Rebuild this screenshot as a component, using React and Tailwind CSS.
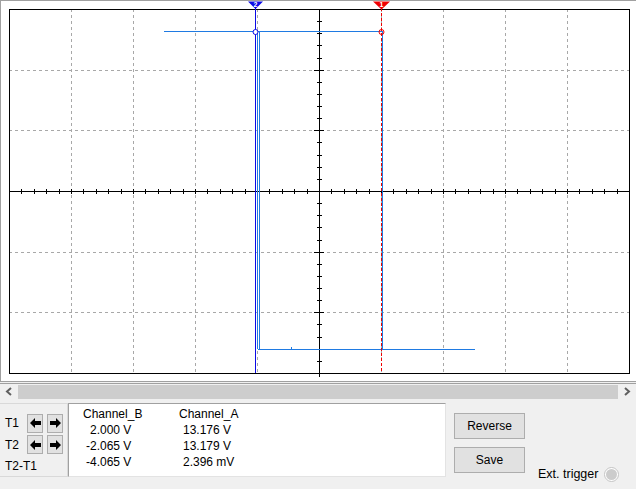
import React from 'react';

// --- Scope geometry (page pixels) ---
const X0 = 9, X1 = 629, Y0 = 9, Y1 = 373;
const DIV_X = 62, DIV_Y = (Y1 - Y0) / 6;
const TRACE = '#1f7ae2';
const CUR2 = '#0a0ae6';
const CUR1 = '#f00000';

const gridX = [1, 2, 3, 4, 6, 7, 8, 9].map((k) => X0 + DIV_X * k);
const gridY = [1, 2, 4, 5].map((k) => Math.round(Y0 + DIV_Y * k));
const ticksX = Array.from({ length: 49 }, (_, i) => X0 + (DIV_X / 5) * (i + 1));
const ticksY = Array.from({ length: 29 }, (_, i) => Y0 + (DIV_Y / 5) * (i + 1));

const Scope = () => (
  <svg width="635" height="380" viewBox="1 1 635 380" className="block">
    {/* dashed grid */}
    {gridX.map((x) => (
      <line key={'gx' + x} x1={x + 0.5} y1={Y0} x2={x + 0.5} y2={Y1} stroke="#a8a8a8" strokeDasharray="3 3" />
    ))}
    {gridY.map((y) => (
      <line key={'gy' + y} x1={X0} y1={y + 0.5} x2={X1} y2={y + 0.5} stroke="#a8a8a8" strokeDasharray="3 3" />
    ))}

    {/* frame + axes */}
    <rect x={X0 + 0.5} y={Y0 + 0.5} width={X1 - X0} height={Y1 - Y0} fill="none" stroke="#000" />
    <line x1={X0} y1={191.5} x2={X1} y2={191.5} stroke="#000" />
    <line x1={319.5} y1={Y0} x2={319.5} y2={Y1 + 4} stroke="#000" />
    {ticksX.map((x) => (
      <line key={'tx' + x} x1={Math.round(x) + 0.5} y1={189} x2={Math.round(x) + 0.5} y2={194} stroke="#000" />
    ))}
    {ticksY.map((y, i) => {
      const major = (i + 1) % 5 === 0;
      return (
        <line key={'ty' + i} x1={major ? 314 : 317} y1={Math.round(y) + 0.5} x2={major ? 324 : 322} y2={Math.round(y) + 0.5} stroke="#000" />
      );
    })}

    {/* traces */}
    <g stroke={TRACE} fill="none">
      <line x1={164} y1={31.5} x2={382} y2={31.5} />
      <line x1={257.5} y1={31} x2={257.5} y2={349} />
      <line x1={259.5} y1={31} x2={259.5} y2={349} />
      <line x1={258} y1={349.5} x2={475} y2={349.5} />
      <line x1={382.5} y1={31} x2={382.5} y2={349} />
      <line x1={291.5} y1={347} x2={291.5} y2={349} />
    </g>

    {/* cursor 2 */}
    <line x1={255.5} y1={8} x2={255.5} y2={Y1} stroke={CUR2} />
    <polygon points="248,1.5 263,1.5 255.5,9" fill={CUR2} />
    <text x={255.5} y={7} fontSize="7" fontWeight="bold" fill="#fff" textAnchor="middle" fontFamily="Liberation Sans, sans-serif">2</text>
    <circle cx={255.5} cy={32} r={2.5} fill="#fff" stroke={CUR2} />

    {/* cursor 1 */}
    <line x1={381.5} y1={8} x2={381.5} y2={Y1} stroke={CUR1} strokeDasharray="3 2" />
    <polygon points="373,1.5 390,1.5 381.5,9.5" fill={CUR1} />
    <text x={381.5} y={7} fontSize="7" fontWeight="bold" fill="#fff" textAnchor="middle" fontFamily="Liberation Sans, sans-serif">1</text>
    <circle cx={381.5} cy={32} r={2.5} fill="none" stroke={CUR1} />
  </svg>
);

const ArrowBtn = ({ dir }) => (
  <button className="w-[16px] h-[19px] flex items-center justify-center border border-[#adadad] bg-[#e1e1e1]">
    <svg width="11" height="10" viewBox="0 0 11 10">
      {dir === 'left' ? (
        <polygon points="0,5 5,0 5,3 11,3 11,7 5,7 5,10" fill="#000" />
      ) : (
        <polygon points="11,5 6,0 6,3 0,3 0,7 6,7 6,10" fill="#000" />
      )}
    </svg>
  </button>
);

const App = () => {
  const font = { fontFamily: '"Liberation Sans", Arial, sans-serif' };

  return (
    <div className="w-[636px] h-[489px] bg-[#f0f0f0] flex flex-col overflow-hidden text-[12px] text-black" style={font}>
      {/* scope area */}
      <div className="h-[382px] border-t border-l border-b border-[#a0a0a0] bg-white">
        <Scope />
      </div>

      {/* horizontal scrollbar */}
      <div className="mt-[1px] border-t border-[#a0a0a0] h-[16px] flex items-center">
        <div className="w-[18px] h-full flex items-center justify-center">
          <svg width="8" height="9" viewBox="0 0 8 9">
            <polyline points="6,1 2,4.5 6,8" fill="none" stroke="#606060" strokeWidth="2" />
          </svg>
        </div>
        <div className="flex-1 h-[14px] bg-[#cdcdcd]"></div>
        <div className="w-[18px] h-full flex items-center justify-center">
          <svg width="8" height="9" viewBox="0 0 8 9">
            <polyline points="2,1 6,4.5 2,8" fill="none" stroke="#606060" strokeWidth="2" />
          </svg>
        </div>
      </div>

      {/* bottom panel */}
      <div className="flex items-start pt-[4px]">
        {/* cursor buttons */}
        <div className="w-[68px] h-[74px] border border-[#d9d9d9] border-l-0 flex flex-col pl-[5px] pt-[9px]">
          <div className="flex items-center h-[20px]">
            <span className="w-[22px]">T1</span>
            <div className="flex gap-[4px]">
              <ArrowBtn dir="left" />
              <ArrowBtn dir="right" />
            </div>
          </div>
          <div className="flex items-center h-[21px] mt-[1px]">
            <span className="w-[22px]">T2</span>
            <div className="flex gap-[4px]">
              <ArrowBtn dir="left" />
              <ArrowBtn dir="right" />
            </div>
          </div>
          <div className="mt-[3px] leading-[16px]">T2-T1</div>
        </div>

        {/* readout */}
        <div className="w-[378px] h-[74px] bg-white border-t border-l border-[#a0a0a0] border-r border-b border-r-[#e3e3e3] border-b-[#e3e3e3] flex pl-[14px] pt-[2px] leading-[16px]">
          <div className="w-[96px] flex flex-col">
            <span>Channel_B</span>
            <span className="pl-[7px]">2.000 V</span>
            <span className="pl-[3px]">-2.065 V</span>
            <span className="pl-[3px]">-4.065 V</span>
          </div>
          <div className="flex flex-col">
            <span>Channel_A</span>
            <span className="pl-[4px]">13.176 V</span>
            <span className="pl-[4px]">13.179 V</span>
            <span className="pl-[4px]">2.396 mV</span>
          </div>
        </div>

        {/* actions */}
        <div className="flex flex-col gap-[8px] ml-[8px] pt-[10px]">
          <button className="w-[71px] h-[26px] border border-[#adadad] bg-[#e1e1e1]">Reverse</button>
          <button className="w-[71px] h-[26px] border border-[#adadad] bg-[#e1e1e1]">Save</button>
        </div>

        <div className="flex items-center ml-[13px] mt-[62px] gap-[6px]">
          <span className="text-[12.5px]">Ext. trigger</span>
          <div className="w-[15px] h-[15px] rounded-full border border-[#c4c4c4] bg-white flex items-center justify-center">
            <div className="w-[11px] h-[11px] rounded-full bg-[#cccccc]"></div>
          </div>
        </div>
      </div>
    </div>
  );
};

export default App;
